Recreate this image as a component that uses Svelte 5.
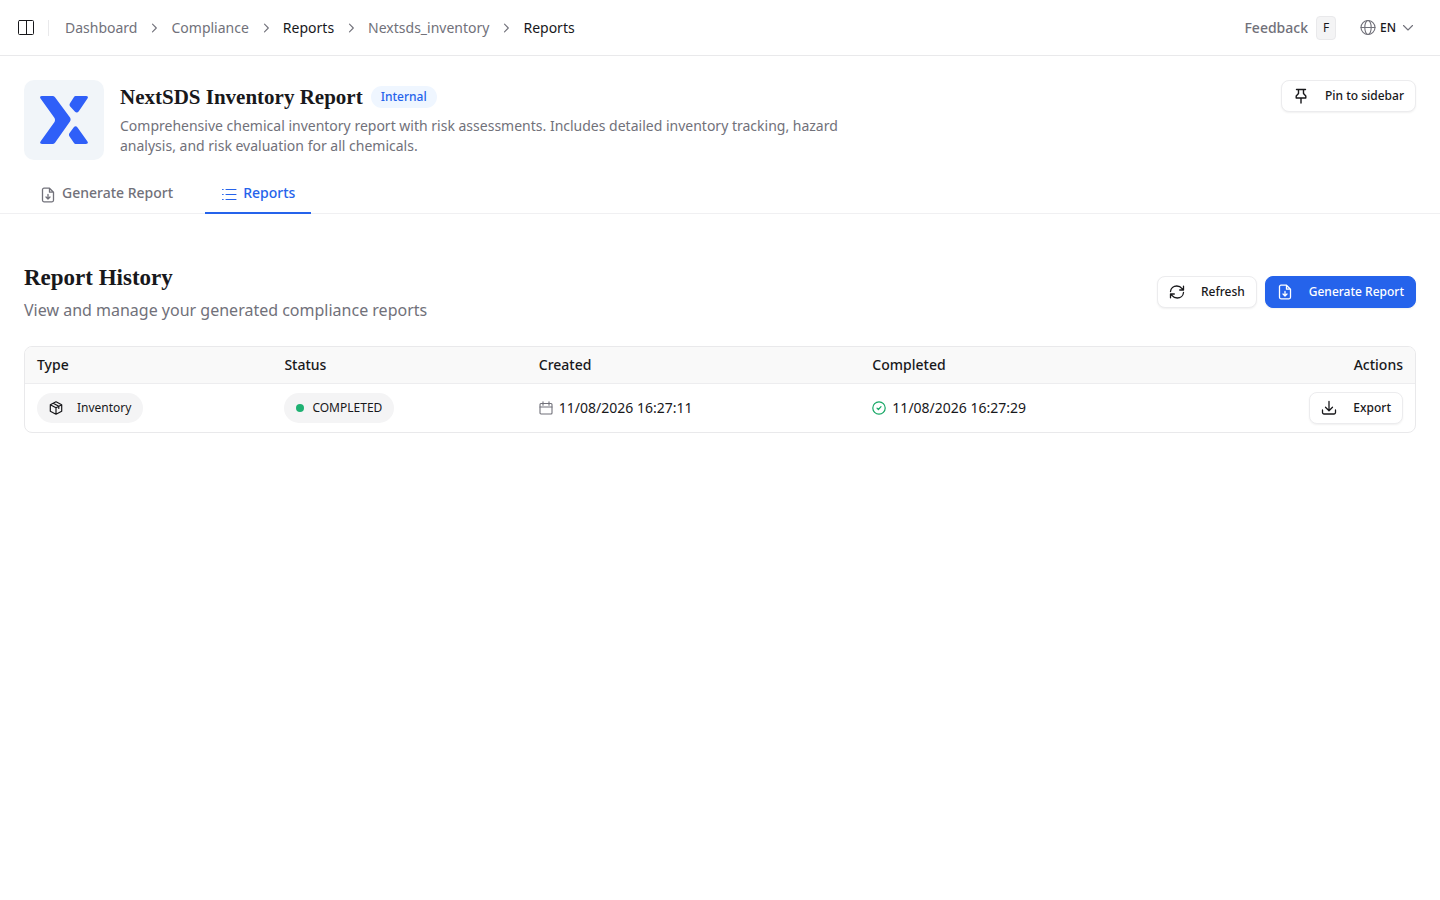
<script>
  const crumbs = [
    { label: 'Dashboard' },
    { label: 'Compliance' },
    { label: 'Reports', strong: true },
    { label: 'Nextsds_inventory' },
    { label: 'Reports', strong: true },
  ];

  const columns = ['Type', 'Status', 'Created', 'Completed', 'Actions'];

  const reports = [
    { id: 1, type: 'Inventory', status: 'COMPLETED', created: '11/08/2026 16:27:11', completed: '11/08/2026 16:27:29' },
  ];

  let activeTab = $state('reports');
</script>

{#snippet fileDown()}
  <svg class="icon" viewBox="0 0 16 16" aria-hidden="true">
    <path d="M9.500 1.200H4A1.500 1.500 0 0 0 2.500 2.700v10.600A1.500 1.500 0 0 0 4 14.800h8a1.500 1.500 0 0 0 1.500-1.500V5.200zM9.500 1.200v4h4M8 7.500v4.500M6 10l2 2 2-2" />
  </svg>
{/snippet}

<header class="topbar">
  <button class="bare" aria-label="Toggle sidebar">
    <svg class="icon panel" viewBox="0 0 18 18" aria-hidden="true">
      <rect x="1.500" y="1.500" width="15" height="14" rx="1" />
      <path d="M9.500 1.500v14" />
    </svg>
  </button>
  <span class="divider"></span>
  <nav class="crumbs" aria-label="Breadcrumb">
    {#each crumbs as crumb, i}
      {#if i > 0}
        <svg class="chevron" viewBox="0 0 14 14" aria-hidden="true"><path d="M5.500 3.200 9.300 7l-3.800 3.800" /></svg>
      {/if}
      <a href="#top" class:strong={crumb.strong}>{crumb.label}</a>
    {/each}
  </nav>
  <button class="bare feedback">Feedback <kbd>F</kbd></button>
  <button class="bare lang">
    <svg class="icon muted" viewBox="0 0 16 16" aria-hidden="true">
      <circle cx="8" cy="7.500" r="7" />
      <ellipse cx="8" cy="7.500" rx="3.200" ry="7" />
      <path d="M1 7.500h14" />
    </svg>
    EN
    <svg class="icon muted caret" viewBox="0 0 16 16" aria-hidden="true"><path d="M3.500 5.500 8 10l4.500-4.500" /></svg>
  </button>
</header>

<section class="intro">
  <div class="logo">
    <svg viewBox="0 0 48 48" aria-hidden="true">
      <path d="M2 0h10.500Q14 0 15 1.300L30 21.500Q31.200 23.500 30 25.500L15 46.700Q14 48 12.500 48H2Q-1 48 .7 45.200L14.500 26Q15.500 24 14.500 22L.7 2.800Q-1 0 2 0Z" />
      <path d="M35.500 0H46q3 0 1.300 2.800L38.800 15.200Q37 17.500 34.800 15.500L30.200 10.500Q29 8.800 30 7.300L34 1Q34.600 0 35.500 0Z" />
      <path d="M35.500 48H46q3 0 1.300-2.800L37.500 31.500Q35.700 29.200 33.800 31.200L29.400 37.200Q28.500 38.700 29.400 40.200L34 47Q34.600 48 35.500 48Z" />
    </svg>
  </div>
  <div class="about">
    <div class="title-row">
      <h1>NextSDS Inventory Report</h1>
      <span class="tag">Internal</span>
    </div>
    <p>Comprehensive chemical inventory report with risk assessments. Includes detailed inventory tracking, hazard analysis, and risk evaluation for all chemicals.</p>
  </div>
  <button class="btn">
    <svg class="icon pin" viewBox="0 0 16 16" aria-hidden="true">
      <path d="M3.500 1.500h9M5.500 1.500v4L3.200 8v2h9.600V8l-2.300-2.500v-4M8 10v5" />
    </svg>
    Pin to sidebar
  </button>
</section>

<div class="tabs" role="tablist">
  <button role="tab" aria-selected={activeTab === 'generate'} class:active={activeTab === 'generate'} onclick={() => (activeTab = 'generate')}>
    {@render fileDown()}
    Generate Report
  </button>
  <button role="tab" aria-selected={activeTab === 'reports'} class:active={activeTab === 'reports'} onclick={() => (activeTab = 'reports')}>
    <svg class="icon list" viewBox="0 0 16 16" aria-hidden="true">
      <path d="M5 2.500h10M5 7.500h10M5 12.500h10M1.500 2.500h.7M1.500 7.500h.7M1.500 12.500h.7" />
    </svg>
    Reports
  </button>
</div>

<main>
  <div class="section-head">
    <div>
      <h2>Report History</h2>
      <p>View and manage your generated compliance reports</p>
    </div>
    <div class="actions">
      <button class="btn">
        <svg class="icon" viewBox="0 0 16 16" aria-hidden="true">
          <path d="M1.500 7.500C1.800 4.200 4.500 2 7.800 2c2.400 0 4 1 5.300 2.700l1 1.300M14.500 2.200V6h-3.800M14.500 8.500c-.3 3.300-3 5.500-6.300 5.500-2.400 0-4-1-5.300-2.700l-1-1.300M1.500 13.800V10h3.800" />
        </svg>
        Refresh
      </button>
      <button class="btn primary">
        {@render fileDown()}
        Generate Report
      </button>
    </div>
  </div>

  <div class="table-wrap">
    <table>
      <thead>
        <tr>
          {#each columns as column}
            <th scope="col">{column}</th>
          {/each}
        </tr>
      </thead>
      <tbody>
        {#each reports as report (report.id)}
          <tr>
            <td>
              <span class="pill type">
                <svg class="small box" viewBox="0 0 14 14" aria-hidden="true">
                  <path d="M7 .8 12.700 3.800v6.400L7 13.200 1.300 10.200V3.800zM1.300 3.800 7 6.800l5.700-3M7 6.800v6.400M4.200 2.300l5.600 3v2.200" />
                </svg>
                {report.type}
              </span>
            </td>
            <td><span class="pill"><span class="dot"></span>{report.status}</span></td>
            <td>
              <span class="date">
                <svg class="small muted" viewBox="0 0 14 14" aria-hidden="true">
                  <rect x="1" y="2.500" width="12" height="10.500" rx="1" />
                  <path d="M1 6h12M4 .8v3.400M10 .8v3.400" />
                </svg>
                {report.created}
              </span>
            </td>
            <td>
              <span class="date">
                <svg class="small ok" viewBox="0 0 14 14" aria-hidden="true">
                  <circle cx="7" cy="7" r="6.200" />
                  <path d="m5 7.100 1.400 1.400L9 5.700" />
                </svg>
                {report.completed}
              </span>
            </td>
            <td>
              <button class="btn">
                <svg class="icon" viewBox="0 0 16 16" aria-hidden="true">
                  <path d="M8 1.500v9M4.500 7.200 8 10.700l3.500-3.500M1.500 10v2.500A1.500 1.500 0 0 0 3 14h10a1.500 1.500 0 0 0 1.500-1.500V10" />
                </svg>
                Export
              </button>
            </td>
          </tr>
        {/each}
      </tbody>
    </table>
  </div>
</main>

<style>
  :global(body) { background: #fff; color: #18181b; font: 14px/20px 'Noto Sans', sans-serif; }
  h1, h2, p { margin: 0; }
  button { font: inherit; color: inherit; cursor: pointer; }
  svg { flex: none; fill: none; stroke: currentColor; stroke-width: 1.3; stroke-linecap: round; stroke-linejoin: round; }
  .icon { width: 16px; height: 16px; }
  .small { width: 14px; height: 14px; stroke-width: 1.1; }
  .muted { color: #71717a; stroke-width: 1.1; }
  .ok { color: #16a765; stroke-width: 1.2; }

  .topbar { display: flex; align-items: center; height: 55px; padding: 0 24px 0 17px; border-bottom: 1px solid #e9e9eb; }
  .bare { display: flex; align-items: center; padding: 0; border: 0; background: none; }
  .icon.panel { width: 18px; height: 18px; stroke-width: 1; }
  .divider { width: 1px; height: 16px; margin: 0 16px 0 13px; background: #e9e9eb; }
  .crumbs { display: flex; align-items: center; gap: 10px; margin-right: auto; }
  .crumbs a { color: #71717a; text-decoration: none; }
  .crumbs a.strong { color: #18181b; }
  .chevron { width: 14px; height: 14px; color: #71717a; stroke-width: 1.1; }
  .feedback { gap: 8px; color: #71717a; font-weight: 500; }
  kbd { box-sizing: border-box; width: 20px; height: 24px; border: 1px solid #e9e9eb; border-radius: 4px; background: #f4f4f5; color: #18181b; font: 12px/22px 'Noto Sans', sans-serif; text-align: center; }
  .lang { gap: 4px; margin-left: 24px; font-size: 12px; font-weight: 500; }

  .intro { display: flex; align-items: flex-start; gap: 16px; padding: 24px 24px 14px; }
  .logo { display: grid; place-items: center; flex: none; width: 80px; height: 80px; border-radius: 10px; background: #f1f5f9; }
  .logo svg { width: 48px; height: 48px; fill: #2f5ff8; stroke: none; }
  .about { flex: 1; }
  .title-row { display: flex; align-items: center; gap: 8px; margin-bottom: 2px; }
  h1, h2 { font-family: 'Liberation Serif', serif; font-weight: 700; }
  h1 { font-size: 21px; line-height: 34px; }
  h2 { font-size: 23px; line-height: 32px; }
  .tag { padding: 2px 10px; border-radius: 12px; background: #eff6ff; color: #2563eb; font-size: 12px; font-weight: 500; line-height: 18px; }
  .about p { max-width: 768px; color: #71717a; }

  .btn { display: inline-flex; align-items: center; gap: 16px; box-sizing: border-box; height: 32px; padding: 0 11px; border: 1px solid #ececee; border-radius: 8px; background: #fff; box-shadow: 0 1px 2px rgba(0, 0, 0, .06); font-size: 12px; font-weight: 500; white-space: nowrap; }
  .btn.primary { border-color: #2563eb; background: #2563eb; color: #fff; }
  .pin { stroke-width: 1.4; }

  .tabs { display: flex; gap: 16px; padding: 0 24px; border-bottom: 1px solid #f0f0f2; }
  .tabs button { display: flex; align-items: center; gap: 6px; height: 40px; margin-bottom: -1px; padding: 0 16px; border: 0; border-bottom: 2px solid transparent; background: none; color: #71717a; font-weight: 500; }
  .tabs button.active { border-color: #2563eb; color: #2563eb; }
  .tabs svg { margin-top: 3px; }
  .list { stroke-width: 1.1; }

  main { padding: 48px 24px 24px; }
  .section-head { display: flex; align-items: center; justify-content: space-between; margin-bottom: 24px; }
  .section-head p { margin-top: 4px; color: #71717a; font-size: 16px; line-height: 24px; }
  .actions { display: flex; gap: 8px; }

  .table-wrap { border: 1px solid #e9e9eb; border-radius: 8px; overflow: hidden; }
  table { width: 100%; border-collapse: collapse; }
  thead tr { background: #f9f9f9; border-bottom: 1px solid #ededef; }
  th { padding: 8px 12px; font-weight: 500; text-align: left; }
  th:nth-child(1) { width: 17.8%; }
  th:nth-child(2) { width: 18.3%; }
  th:nth-child(3), th:nth-child(4) { width: 24%; }
  td { padding: 8px 12px; }
  th:last-child, td:last-child { text-align: right; }
  td .btn { vertical-align: top; }
  .pill { display: inline-flex; align-items: center; gap: 8px; height: 30px; padding: 0 12px; border-radius: 15px; background: #f4f4f5; font-size: 12px; vertical-align: top; }
  .type { gap: 14px; }
  .box { stroke-width: 1.2; }
  .dot { width: 8px; height: 8px; border-radius: 50%; background: #1eb172; }
  .date { display: flex; align-items: center; gap: 6px; }
</style>
